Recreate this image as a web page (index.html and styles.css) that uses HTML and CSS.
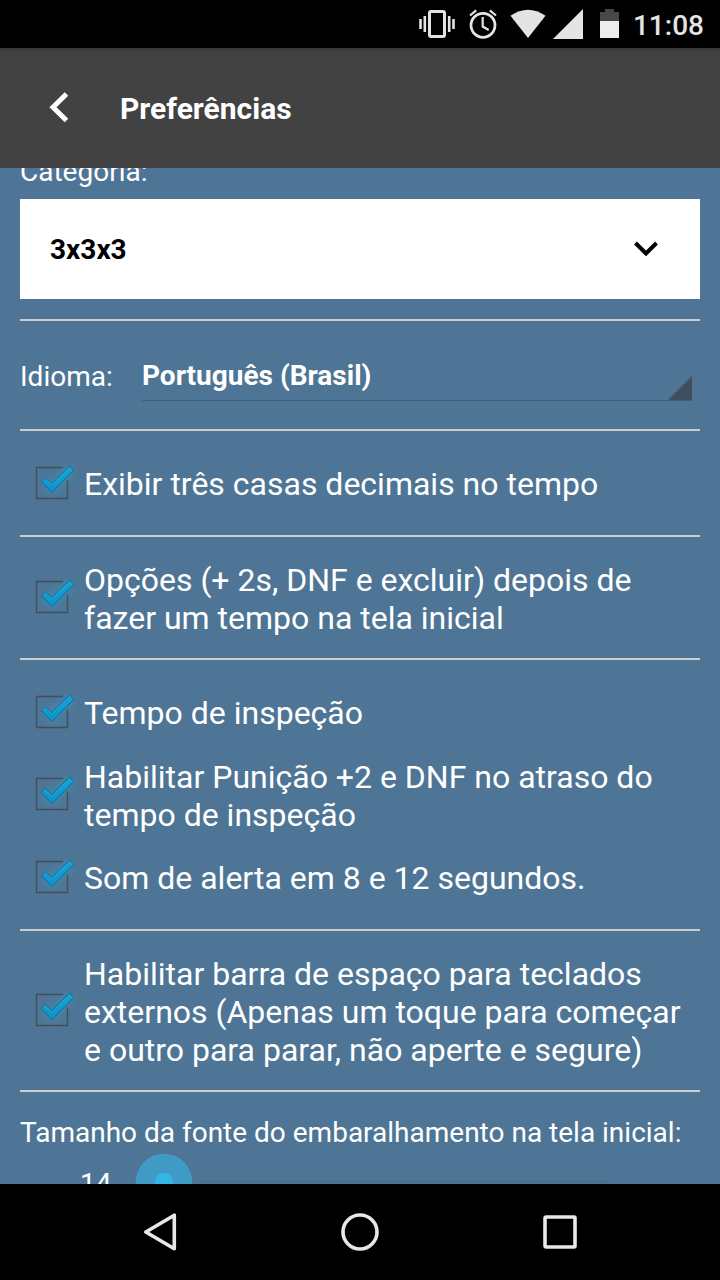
FILE: index.html
```
<!DOCTYPE html>
<html lang="pt-BR">
	<head>
		<meta charset="utf-8"/>
		<title>Preferências</title>
		<link rel="stylesheet" href="styles.css">
	</head>
	<body>
		<!-- shared checkbox drawing -->
		<svg class="defs" width="0" height="0">
			<defs>
				<linearGradient id="tick" x1="0" y1="0" x2="0" y2="1">
					<stop offset="0" stop-color="#12a5da"/>
					<stop offset="1" stop-color="#0a93cc"/>
				</linearGradient>
				<filter id="glow" x="-50%" y="-50%" width="200%" height="200%">
					<feGaussianBlur stdDeviation="4"/>
				</filter>
				<symbol id="checkbox" viewBox="0 0 64 64">
					<path d="M26 31l6 6 19-19" fill="none" stroke="#2fa5d6" stroke-width="9" opacity=".5" filter="url(#glow)"/>
					<path d="M43 16.500H16.500v31h31V29.500" fill="none" stroke="#434e59" stroke-width="1.400"/>
					<path d="M21.500 30.700L25.300 27l6.400 5.600L49.700 15.200l4.200 4L32 41.500z" fill="url(#tick)" stroke="#17688d" stroke-width="1" stroke-linejoin="round"/>
					<path d="M22.800 29.800l2.500-1.800 6.500 6L49.600 16.400" fill="none" stroke="#35b2dd" stroke-width=".7"/>
				</symbol>
			</defs>
		</svg>
		<div class="status-bar">
			<svg class="status-icons" width="220" height="48" viewBox="410 0 220 48">
				<rect x="429.500" y="11.500" width="15" height="25" rx="1.500" fill="none" stroke="#e4e4e4" stroke-width="3"/>
				<path d="M420.500 19v10M424.800 16v16M449.200 16v16M453.500 19v10" stroke="#e4e4e4" stroke-width="2.600"/>
				<circle cx="483" cy="25.300" r="12" fill="none" stroke="#e4e4e4" stroke-width="2.700"/>
				<path d="M482.700 17v9.500l6 3.500M470 15.500l6.200-5.200M496 15.500l-6.200-5.200" fill="none" stroke="#e4e4e4" stroke-width="2.200"/>
				<path d="M510.500 15.800Q528 3.500 545.500 15.800L528 38z" fill="#e4e4e4"/>
				<path d="M583 9v30h-30z" fill="#e4e4e4"/>
				<path d="M600 21v-9h5V9h9v3h5v9z" fill="#474747"/>
				<path d="M600 21h19v17h-19z" fill="#ececec"/>
			</svg>
			<span class="clock">11:08</span>
		</div>
		<div class="header">
			<svg class="back" width="20" height="32" viewBox="0 0 20 32">
				<path d="M17.500 2L4 15.300 17.500 28.500" fill="none" stroke="#fff" stroke-width="5"/>
			</svg>
			<h1>Preferências</h1>
		</div>
		<div class="content">
			<div class="category-label">Categoria:</div>
			<div class="category">
				<span>3x3x3</span>
				<svg width="26" height="18" viewBox="0 0 26 18">
					<path d="M2.500 3L13 13.500 23.500 3" fill="none" stroke="#000" stroke-width="4"/>
				</svg>
			</div>
			<div class="section language">
				<span class="label">Idioma:</span>
				<div class="spinner">Português (Brasil)
					<svg class="corner" width="24" height="24"><path d="M24 0v24H0z" fill="#404f5d"/></svg>
				</div>
			</div>
			<div class="section">
				<label class="option"><svg class="check"><use href="#checkbox"/></svg><span>Exibir três casas decimais no tempo</span></label>
			</div>
			<div class="section">
				<label class="option double"><svg class="check"><use href="#checkbox"/></svg><span>Opções (+ 2s, DNF e excluir) depois de<br>fazer um tempo na tela inicial</span></label>
			</div>
			<div class="section">
				<label class="option"><svg class="check"><use href="#checkbox"/></svg><span>Tempo de inspeção</span></label>
				<label class="option double"><svg class="check"><use href="#checkbox"/></svg><span>Habilitar Punição +2 e DNF no atraso do<br>tempo de inspeção</span></label>
				<label class="option"><svg class="check"><use href="#checkbox"/></svg><span>Som de alerta em 8 e 12 segundos.</span></label>
			</div>
			<div class="section">
				<label class="option triple"><svg class="check"><use href="#checkbox"/></svg><span>Habilitar barra de espaço para teclados<br>externos (Apenas um toque para começar<br>e outro para parar, não aperte e segure)</span></label>
			</div>
			<div class="section font-size">
				<div class="label">Tamanho da fonte do embaralhamento na tela inicial:</div>
				<div class="slider">
					<span class="value">14</span>
					<svg width="476" height="60" viewBox="0 0 476 60">
						<path d="M30 30h444" stroke="#50708a" stroke-width="2"/>
						<circle cx="30" cy="30" r="28.300" fill="#3f9bc5"/>
						<circle cx="30" cy="30" r="9.300" fill="#33b5e5"/>
					</svg>
				</div>
			</div>
		</div>
		<div class="nav-bar">
			<svg width="40" height="40" viewBox="0 0 40 40"><path d="M34.300 3.200v33.600L5.800 20z"/></svg>
			<svg width="40" height="40" viewBox="0 0 40 40"><circle cx="20" cy="20" r="17"/></svg>
			<svg width="40" height="40" viewBox="0 0 40 40"><rect x="5" y="5" width="30" height="30" rx="1"/></svg>
		</div>
	</body>
</html>
```
FILE: styles.css
```
* {
	box-sizing: border-box;
}
body {
	margin: 0;
	width: 720px;
	height: 1280px;
	display: flex;
	flex-direction: column;
	overflow: hidden;
	font-family: Roboto, sans-serif;
	font-size: 28px;
	color: #fff;
	background: #000;
}
svg {
	display: block;
	flex: none;
}
.defs {
	position: absolute;
}
.status-bar {
	height: 48px;
	flex: none;
	display: flex;
	align-items: center;
	justify-content: flex-end;
	padding-right: 16px;
	background: #000;
}
.clock {
	width: 74px;
	padding-top: 3px;
	text-align: right;
	font-size: 28px;
	font-weight: 500;
	color: #e4e4e4;
}
.header {
	height: 120px;
	flex: none;
	display: flex;
	align-items: center;
	padding-left: 49px;
	background: linear-gradient(#393939, #424242 5px);
}
.header h1 {
	margin: 1px 0 0 51px;
	font-size: 30px;
	font-weight: bold;
}
.content {
	height: 1016px;
	flex: none;
	overflow: hidden;
	padding: 0 20px;
	background: #4e7595;
}
.category-label {
	height: 33px;
	line-height: 33px;
	margin: -13px 0 11px;
}
.category {
	height: 100px;
	display: flex;
	align-items: center;
	justify-content: space-between;
	margin-bottom: 20px;
	padding: 0 41px 0 30px;
	background: #fff;
	color: #000;
	font-weight: bold;
}
.section {
	border-top: 2px solid #ccc;
	padding: 20px 0;
	display: flex;
	flex-direction: column;
	gap: 10px;
}
.language {
	height: 110px;
	flex-direction: row;
	align-items: center;
	gap: 0;
}
.language .label {
	width: 122px;
	padding-top: 3px;
}
.spinner {
	position: relative;
	width: 550px;
	height: 50px;
	line-height: 50px;
	margin-top: 2px;
	border-bottom: 1px solid #445e75;
	font-weight: bold;
}
/* dropdown triangle over the underline */
.corner {
	position: absolute;
	right: 0;
	bottom: 0;
}
.option {
	height: 64px;
	display: flex;
	align-items: center;
	font-size: 32px;
	line-height: 38px;
	white-space: nowrap;
}
.option span {
	padding-top: 2px;
}
.double {
	height: 81px;
}
.triple {
	height: 119px;
}
.check {
	width: 64px;
	height: 64px;
}
.double .check, .triple .check {
	margin-bottom: 1px;
}
.font-size {
	padding-top: 24px;
	gap: 0;
}
.font-size .label {
	height: 34px;
	line-height: 34px;
	white-space: nowrap;
}
.slider {
	height: 60px;
	margin-top: 2px;
	display: flex;
	align-items: center;
}
.value {
	width: 114px;
	padding: 2px 0 0 60px;
}
.nav-bar {
	height: 96px;
	flex: none;
	display: flex;
	align-items: center;
	justify-content: center;
	gap: 160px;
	background: #000;
}
.nav-bar svg {
	fill: none;
	stroke: #e8e8e8;
	stroke-width: 3.6;
	stroke-linejoin: round;
}
```
